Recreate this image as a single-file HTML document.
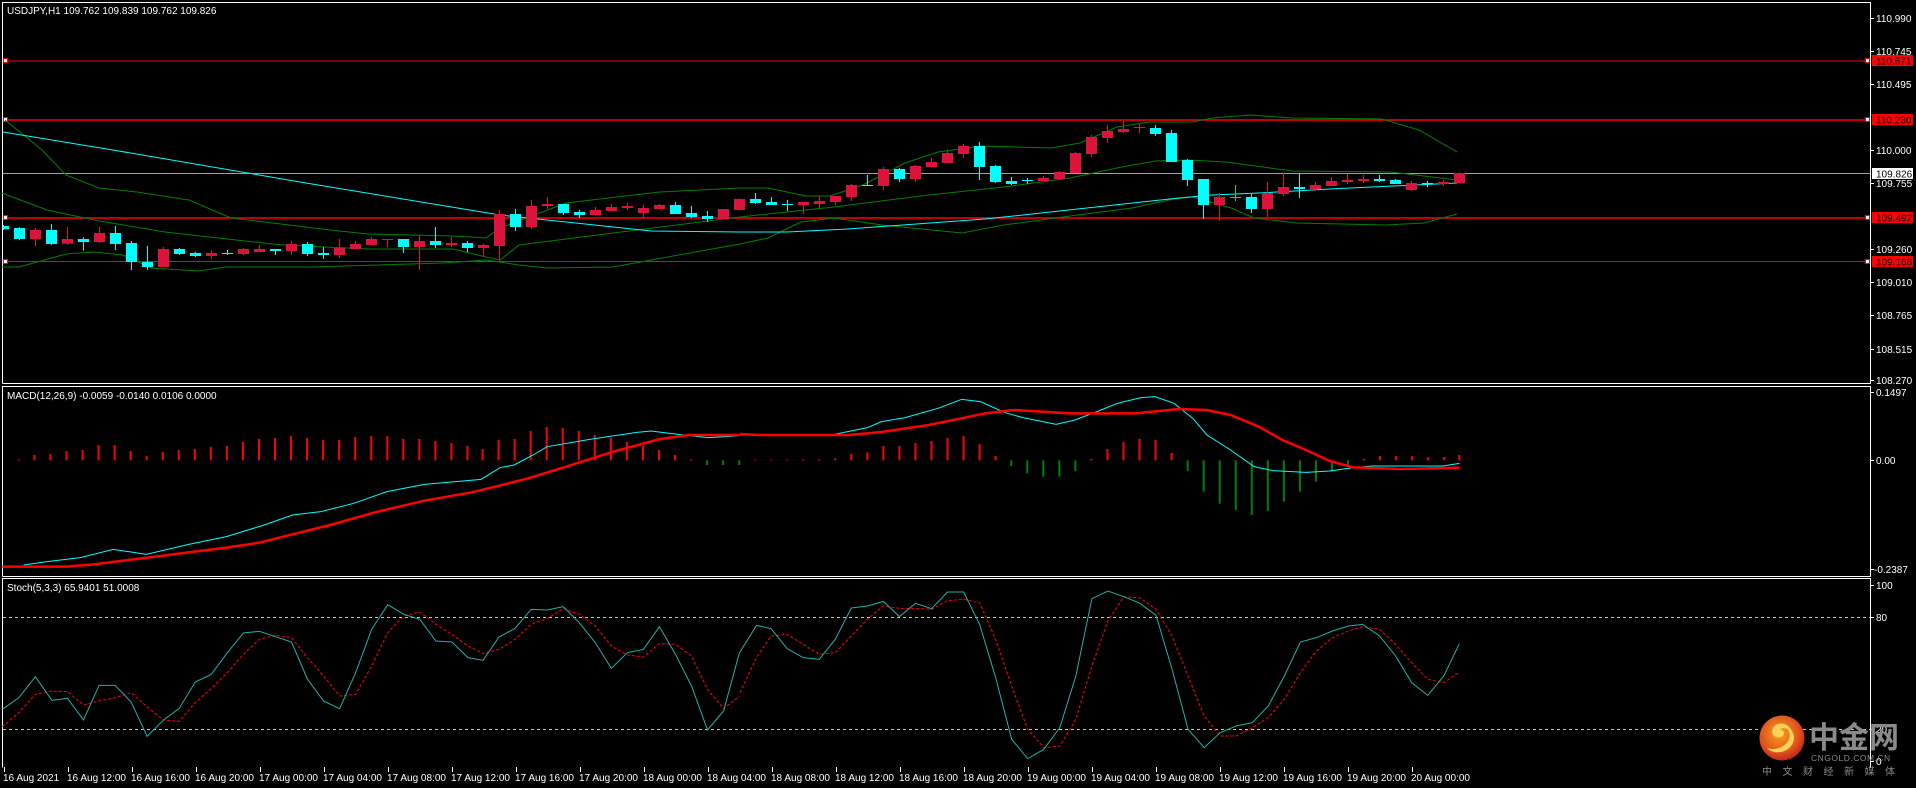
<!DOCTYPE html>
<html><head><meta charset="utf-8"><style>
html,body{margin:0;padding:0;background:#000;width:1916px;height:788px;overflow:hidden}
svg{display:block}
text{font-family:"Liberation Sans","Noto Sans CJK SC",sans-serif;font-size:10px;fill:#fff}
.ns{vector-effect:non-scaling-stroke}
</style></head><body>
<svg width="1916" height="788" viewBox="0 0 1916 788" xmlns="http://www.w3.org/2000/svg">
<defs>
<radialGradient id="lg" cx="45%" cy="40%" r="60%"><stop offset="0" stop-color="#f7a21b"/><stop offset="0.7" stop-color="#e2541d"/><stop offset="1" stop-color="#c4271a"/></radialGradient>
</defs>
<rect width="1916" height="788" fill="#000"/>
<g fill="none" stroke="#fff" stroke-width="1">
<path d="M2.5 383.5V2.5H1870.5V383.5H2.5"/>
<path d="M2.5 576.5V386.5H1870.5V576.5H2.5"/>
<path d="M2.5 767.5V578.5H1870.5V767.5"/>
</g>
<line x1="3" y1="61" x2="1870" y2="61" stroke="#ff0000" stroke-width="1"/>
<line x1="3" y1="120" x2="1870" y2="120" stroke="#ff0000" stroke-width="1.5"/>
<line x1="3" y1="173.5" x2="1870" y2="173.5" stroke="#a0a0a0" stroke-width="1"/>
<line x1="3" y1="218" x2="1870" y2="218" stroke="#ff0000" stroke-width="1.5"/>
<line x1="3" y1="261.5" x2="1870" y2="261.5" stroke="#ff0000" stroke-width="1"/>
<g fill="#fff" stroke="#ff0000" stroke-width="1">
<rect x="3.5" y="58.5" width="4" height="4"/><rect x="1865.5" y="58.5" width="4" height="4"/>
<rect x="3.5" y="117.5" width="4" height="4"/><rect x="1865.5" y="117.5" width="4" height="4"/>
<rect x="3.5" y="215.5" width="4" height="4"/><rect x="1865.5" y="215.5" width="4" height="4"/>
<rect x="3.5" y="259.5" width="4" height="4"/><rect x="1865.5" y="259.5" width="4" height="4"/>
</g>
<g fill="none" stroke="#008000" stroke-width="1">
<polyline points="5,120 42,150 66,175 99,188 137,192 189,200 231,218 330,230 368,234 453,236 486,238 500,228 566,203 660,192 740,188 768,188 787,192 806,196 830,196 863,185 905,163 938,152 981,146 1051,148 1080,143 1117,127 1150,122 1193,122 1212,118 1250,115 1292,118 1382,119 1419,130 1457,152"/>
<polyline points="2,193 47,210 94,220 165,232 236,240 283,245 368,249 453,249 486,257 500,260 519,245 613,233 740,217 834,207 929,195 1004,187 1070,178 1117,168 1155,161 1188,160 1226,162 1292,171 1391,172 1457,180"/>
<polyline points="2,267 19,267 66,254 94,252 123,255 151,268 198,271 226,267 311,267 443,263 486,260 519,265 547,268 613,267 651,260 740,244 768,238 801,222 834,218 882,225 962,233 1004,225 1070,216 1132,208 1174,199 1193,197 1231,208 1254,218 1297,223 1386,225 1424,223 1457,214"/>
</g>
<polyline fill="none" stroke="#00ffff" stroke-width="1" points="3,132 113,150 300,182 500,215 651,231 740,232 787,232 848,229 985,219 1004,217 1179,198 1212,195 1259,193 1330,189 1457,183"/>
<g transform="translate(0,150) scale(1,0.33333)">
<path class="ns" fill="none" stroke="#dc143c" stroke-width="1" d="M35.5 234V288M67.5 231V285M99.5 231V279M163.5 291V351M211.5 300V327M243.5 294V315M259.5 285V306M291.5 273V315M339.5 267V324M355.5 273V297M371.5 261V285M387.5 267V291M419.5 255V360M451.5 261V291M483.5 282V321M499.5 180V333M531.5 150V237M547.5 141V177M595.5 171V195M611.5 162V183M627.5 159V180M643.5 165V204M659.5 162V177M723.5 177V207M739.5 145V182"/>
<g fill="#dc143c">
<rect x="30" y="240" width="11" height="27"/><rect x="62" y="267" width="11" height="14"/><rect x="94" y="249" width="11" height="27"/><rect x="158" y="297" width="11" height="54"/><rect x="206" y="309" width="11" height="9"/><rect x="238" y="297" width="11" height="15"/><rect x="254" y="297" width="11" height="9"/><rect x="286" y="282" width="11" height="21"/><rect x="334" y="294" width="11" height="21"/><rect x="350" y="282" width="11" height="15"/><rect x="366" y="267" width="11" height="18"/><rect x="382" y="267" width="11" height="3"/><rect x="414" y="273" width="11" height="18"/><rect x="446" y="279" width="11" height="6"/><rect x="478" y="285" width="11" height="9"/><rect x="494" y="192" width="11" height="96"/><rect x="526" y="168" width="11" height="63"/><rect x="542" y="162" width="11" height="6"/><rect x="590" y="180" width="11" height="15"/><rect x="606" y="171" width="11" height="12"/><rect x="622" y="168" width="11" height="6"/><rect x="638" y="174" width="11" height="15"/><rect x="654" y="165" width="11" height="12"/><rect x="718" y="177" width="11" height="30"/><rect x="734" y="147" width="11" height="33"/>
</g>
<path class="ns" fill="none" stroke="#00ffff" stroke-width="1" d="M3.5 225V240M19.5 231V270M51.5 222V285M83.5 262V302M115.5 228V300M131.5 273V360M147.5 288V360M179.5 294V315M195.5 306V321M227.5 300V315M275.5 297V315M307.5 276V318M323.5 291V327M403.5 267V309M435.5 231V294M467.5 273V306M515.5 177V243M563.5 162V195M579.5 180V204M675.5 156V192M691.5 168V204M707.5 183V216"/>
<g fill="#00ffff">
<rect x="3" y="228" width="6" height="10"/><rect x="14" y="234" width="11" height="33"/><rect x="46" y="240" width="11" height="42"/><rect x="78" y="267" width="11" height="9"/><rect x="110" y="249" width="11" height="33"/><rect x="126" y="279" width="11" height="57"/><rect x="142" y="336" width="11" height="15"/><rect x="174" y="297" width="11" height="15"/><rect x="190" y="309" width="11" height="9"/><rect x="222" y="309" width="11" height="3"/><rect x="270" y="297" width="11" height="6"/><rect x="302" y="282" width="11" height="30"/><rect x="318" y="309" width="11" height="6"/><rect x="398" y="267" width="11" height="24"/><rect x="430" y="273" width="11" height="12"/><rect x="462" y="279" width="11" height="15"/><rect x="510" y="192" width="11" height="39"/><rect x="558" y="162" width="11" height="27"/><rect x="574" y="186" width="11" height="9"/><rect x="670" y="165" width="11" height="27"/><rect x="686" y="189" width="11" height="12"/><rect x="702" y="198" width="11" height="9"/>
</g>
</g>
<g transform="translate(0,110) scale(1,0.33333)">
<path class="ns" fill="none" stroke="#dc143c" stroke-width="1" d="M803.5 276V312M819.5 258V294M835.5 258V285M851.5 222V273M883.5 171V240M915.5 165V216M931.5 144V171M947.5 123V159M963.5 102V144M1043.5 198V213M1059.5 183V210M1075.5 126V189M1091.5 75V141M1107.5 45V99M1123.5 33V69M1139.5 42V69M1219.5 249V333M1267.5 216V321M1283.5 189V258M1315.5 216V243M1331.5 201V228M1347.5 192V222M1363.5 195V219M1411.5 213V243M1443.5 210V228M1459.5 187V221"/>
<g fill="#dc143c">
<rect x="798" y="276" width="11" height="9"/><rect x="814" y="273" width="11" height="9"/><rect x="830" y="258" width="11" height="18"/><rect x="846" y="225" width="11" height="36"/><rect x="878" y="177" width="11" height="51"/><rect x="910" y="168" width="11" height="39"/><rect x="926" y="156" width="11" height="15"/><rect x="942" y="129" width="11" height="30"/><rect x="958" y="108" width="11" height="24"/><rect x="1038" y="204" width="11" height="9"/><rect x="1054" y="186" width="11" height="21"/><rect x="1070" y="129" width="11" height="60"/><rect x="1086" y="81" width="11" height="51"/><rect x="1102" y="63" width="11" height="21"/><rect x="1118" y="57" width="11" height="9"/><rect x="1134" y="51" width="11" height="3"/><rect x="1214" y="261" width="11" height="24"/><rect x="1262" y="249" width="11" height="48"/><rect x="1278" y="231" width="11" height="21"/><rect x="1310" y="225" width="11" height="12"/><rect x="1326" y="213" width="11" height="15"/><rect x="1342" y="210" width="11" height="6"/><rect x="1358" y="207" width="11" height="6"/><rect x="1406" y="219" width="11" height="21"/><rect x="1438" y="216" width="11" height="6"/><rect x="1454" y="189" width="11" height="30"/>
</g>
<path class="ns" fill="none" stroke="#00ffff" stroke-width="1" d="M755.5 249V282M771.5 261V285M787.5 270V303M867.5 195V228M899.5 174V216M979.5 96V210M995.5 165V219M1011.5 201V225M1027.5 204V222M1155.5 45V78M1171.5 60V156M1187.5 147V228M1203.5 207V327M1251.5 252V309M1299.5 189V264M1379.5 195V216M1395.5 207V222M1427.5 213V231"/>
<g fill="#00ffff">
<rect x="750" y="267" width="11" height="12"/><rect x="766" y="276" width="11" height="9"/><rect x="782" y="282" width="11" height="3"/><rect x="862" y="225" width="11" height="3"/><rect x="894" y="177" width="11" height="30"/><rect x="974" y="108" width="11" height="63"/><rect x="990" y="168" width="11" height="48"/><rect x="1006" y="213" width="11" height="9"/><rect x="1022" y="210" width="11" height="3"/><rect x="1150" y="54" width="11" height="18"/><rect x="1166" y="69" width="11" height="87"/><rect x="1182" y="150" width="11" height="60"/><rect x="1198" y="207" width="11" height="78"/><rect x="1246" y="261" width="11" height="36"/><rect x="1294" y="231" width="11" height="6"/><rect x="1374" y="207" width="11" height="6"/><rect x="1390" y="210" width="11" height="12"/><rect x="1422" y="219" width="11" height="3"/>
</g>
<path class="ns" fill="none" stroke="#32cd32" stroke-width="1" d="M1235.5 225V273"/>
<rect x="1230" y="261" width="11" height="3" fill="#32cd32"/>
</g>
<text x="7" y="14">USDJPY,H1  109.762 109.839 109.762 109.826</text>
<g transform="translate(0,385) scale(0.47170,0.33333)">
<path class="ns" fill="none" stroke="#ff0000" stroke-width="2" d="M40 226V223M73 226V210M107 226V207M141 226V198M175 226V195M209 226V180M243 226V180M277 226V198M311 226V213M345 226V201M379 226V195M413 226V192M447 226V186M481 226V183M515 226V171M549 226V162M583 226V159M617 226V153M651 226V159M685 226V165M719 226V165M753 226V156M787 226V153M821 226V153M855 226V162M889 226V162M923 226V168M957 226V174M991 226V183M1023 226V192M1057 226V165M1091 226V162M1125 226V138M1159 226V126M1193 226V129M1227 226V138M1261 226V150M1295 226V159M1329 226V171M1363 226V183M1397 226V195M1431 226V210M1465 226V223"/>
<path class="ns" fill="none" stroke="#008000" stroke-width="2" d="M1499 226V240M1533 226V240M1567 226V240"/>
<polyline class="ns" fill="none" stroke="#00ffff" stroke-width="1" points="50,540 100,530 170,518 240,493 310,508 400,478 480,455 560,420 620,390 680,380 750,355 820,320 900,298 1020,283 1060,248 1090,240 1130,210 1160,185 1250,163 1350,142 1380,138 1420,145 1500,158 1540,155 1568,152"/>
<polyline class="ns" fill="none" stroke="#ff0000" stroke-width="2.5" points="5,545 140,545 200,538 300,520 400,502 480,488 550,473 600,455 700,420 800,380 900,347 1000,322 1050,305 1120,280 1200,245 1300,200 1400,162 1460,150 1568,150"/>
</g>
<g transform="translate(740,385) scale(0.47170,0.33333)">
<path class="ns" fill="none" stroke="#ff0000" stroke-width="2" d="M32 226V224M66 226V224M100 226V224M134 226V223M168 226V223M202 226V220M236 226V207M270 226V202M304 226V183M338 226V183M372 226V174M406 226V168M440 226V159M474 226V153M508 226V177M542 226V213M745 226V222M779 226V192M813 226V171M847 226V162M881 226V165M915 226V204M1323 226V222M1357 226V213M1391 226V213M1425 226V213M1459 226V216M1493 226V216M1525 226V210"/>
<path class="ns" fill="none" stroke="#008000" stroke-width="2" d="M575 226V243M609 226V265M643 226V275M677 226V275M711 226V258M949 226V258M983 226V320M1017 226V356M1051 226V375M1085 226V390M1119 226V378M1153 226V350M1187 226V320M1221 226V290M1255 226V260M1289 226V240"/>
<polyline class="ns" fill="none" stroke="#00ffff" stroke-width="1" points="0,150 200,148 270,128 300,110 350,98 420,70 470,43 510,50 560,82 600,98 670,118 710,105 760,78 800,55 850,38 880,35 920,55 960,100 990,150 1040,195 1090,245 1130,257 1200,262 1250,258 1300,248 1340,243 1490,243 1525,235"/>
<polyline class="ns" fill="none" stroke="#ff0000" stroke-width="2.5" points="0,147 40,150 230,150 300,141 400,120 470,100 520,85 580,75 700,85 840,85 930,72 990,75 1040,90 1100,125 1150,165 1200,195 1250,228 1300,247 1400,252 1460,250 1525,248"/>
</g>
<text x="7" y="399">MACD(12,26,9) -0.0059 -0.0140 0.0106 0.0000</text>
<line x1="3" y1="617.5" x2="1870" y2="617.5" stroke="#c8c8c8" stroke-dasharray="3,3"/>
<line x1="3" y1="729.5" x2="1870" y2="729.5" stroke="#c8c8c8" stroke-dasharray="3,3"/>
<g transform="translate(0,576) scale(0.47170,0.33333)">
<polyline class="ns" fill="none" stroke="#ff0000" stroke-width="1" stroke-dasharray="3,2" points="5,452 40,410 75,355 110,345 143,347 177,387 210,375 244,365 278,350 312,393 346,432 380,436 414,380 448,338 482,290 516,235 550,190 584,178 618,185 652,245 686,300 720,360 754,355 788,270 822,170 856,120 890,108 924,145 958,175 992,210 1024,232 1058,220 1092,190 1126,145 1160,128 1194,98 1228,115 1262,150 1296,210 1330,237 1364,243 1398,203 1432,205 1466,240 1500,340 1534,398 1568,360"/>
<polyline class="ns" fill="none" stroke="#20b2aa" stroke-width="1" points="5,400 40,365 75,302 110,373 143,367 177,432 210,328 244,328 278,378 312,481 346,433 380,397 414,318 448,295 482,230 516,171 550,166 584,182 618,198 652,310 686,375 720,398 754,290 788,160 822,86 856,115 890,130 924,195 958,198 992,245 1024,253 1058,183 1092,157 1126,100 1160,102 1194,92 1228,140 1262,200 1296,277 1330,230 1364,220 1398,152 1432,235 1466,330 1500,462 1534,405 1568,228"/>
</g>
<g transform="translate(740,576) scale(0.47170,0.33333)">
<polyline class="ns" fill="none" stroke="#ff0000" stroke-width="1" stroke-dasharray="3,2" points="0,350 35,245 66,180 100,175 134,205 168,235 202,230 236,180 270,130 304,90 338,97 372,97 406,100 440,74 474,70 508,80 542,190 576,330 610,460 644,515 678,510 712,430 746,270 780,135 814,62 848,66 882,100 916,180 950,300 984,420 1018,480 1052,480 1086,455 1120,425 1154,370 1188,290 1222,225 1256,185 1290,165 1320,152 1356,160 1390,205 1424,260 1458,310 1492,320 1525,288"/>
<polyline class="ns" fill="none" stroke="#20b2aa" stroke-width="1" points="0,228 35,148 66,158 100,218 134,245 168,250 202,190 236,96 270,90 304,76 338,122 372,82 406,98 440,48 474,48 508,145 542,305 576,490 610,548 644,520 678,455 712,300 746,68 780,45 814,62 848,82 882,118 916,280 950,460 984,515 1018,470 1052,450 1086,440 1120,390 1154,300 1188,198 1222,185 1256,165 1290,150 1320,145 1356,180 1390,240 1424,320 1458,358 1492,300 1525,203"/>
</g>
<text x="7" y="591">Stoch(5,3,3) 65.9401 51.0008</text>
<g stroke="#fff" stroke-width="1">
<path d="M1870 18.5h4M1870 51.5h4M1870 84.5h4M1870 150.5h4M1870 183.5h4M1870 249.5h4M1870 282.5h4M1870 315.5h4M1870 349.5h4M1870 380.5h4M1870 392.5h4M1870 460.5h4M1870 569.5h4M1870 585.5h4M1870 617.5h4M1870 729.5h4M1870 761.5h4"/>
</g>
<text x="1876" y="22">110.990</text>
<text x="1876" y="55">110.745</text>
<text x="1876" y="88">110.495</text>
<text x="1876" y="154">110.000</text>
<text x="1876" y="187">109.755</text>
<text x="1876" y="253">109.260</text>
<text x="1876" y="286">109.010</text>
<text x="1876" y="319">108.765</text>
<text x="1876" y="353">108.515</text>
<text x="1876" y="384">108.270</text>
<rect x="1872" y="55" width="41" height="11" fill="#ff0000"/><text x="1876" y="64.5" style="fill:#000">110.671</text>
<rect x="1872" y="114" width="41" height="11" fill="#ff0000"/><text x="1876" y="123.5" style="fill:#000">110.230</text>
<rect x="1872" y="168" width="41" height="11" fill="#fff"/><text x="1876" y="177.5" style="fill:#000">109.826</text>
<rect x="1872" y="212" width="41" height="11" fill="#ff0000"/><text x="1876" y="221.5" style="fill:#000">109.492</text>
<rect x="1872" y="256" width="41" height="11" fill="#ff0000"/><text x="1876" y="265.5" style="fill:#000">109.168</text>
<text x="1876" y="396">0.1497</text>
<text x="1876" y="464">0.00</text>
<text x="1874" y="573">-0.2387</text>
<text x="1876" y="589">100</text>
<text x="1876" y="621">80</text>
<text x="1876" y="733">20</text>
<text x="1876" y="765">0</text>
<path stroke="#fff" stroke-width="1" d="M4.5 767v5M68.5 767v5M132.5 767v5M196.5 767v5M260.5 767v5M324.5 767v5M388.5 767v5M452.5 767v5M516.5 767v5M580.5 767v5M644.5 767v5M708.5 767v5M772.5 767v5M836.5 767v5M900.5 767v5M964.5 767v5M1028.5 767v5M1092.5 767v5M1156.5 767v5M1220.5 767v5M1284.5 767v5M1348.5 767v5M1412.5 767v5"/>
<g>
<text x="3" y="781">16 Aug 2021</text><text x="67" y="781">16 Aug 12:00</text><text x="131" y="781">16 Aug 16:00</text><text x="195" y="781">16 Aug 20:00</text><text x="259" y="781">17 Aug 00:00</text><text x="323" y="781">17 Aug 04:00</text><text x="387" y="781">17 Aug 08:00</text><text x="451" y="781">17 Aug 12:00</text><text x="515" y="781">17 Aug 16:00</text><text x="579" y="781">17 Aug 20:00</text><text x="643" y="781">18 Aug 00:00</text><text x="707" y="781">18 Aug 04:00</text><text x="771" y="781">18 Aug 08:00</text><text x="835" y="781">18 Aug 12:00</text><text x="899" y="781">18 Aug 16:00</text><text x="963" y="781">18 Aug 20:00</text><text x="1027" y="781">19 Aug 00:00</text><text x="1091" y="781">19 Aug 04:00</text><text x="1155" y="781">19 Aug 08:00</text><text x="1219" y="781">19 Aug 12:00</text><text x="1283" y="781">19 Aug 16:00</text><text x="1347" y="781">19 Aug 20:00</text><text x="1411" y="781">20 Aug 00:00</text>
</g>
<circle cx="1782" cy="738" r="22.5" fill="url(#lg)"/>
<path d="M1790 728c-4-6-14-6-17 0c-3 6 2 11 8 9c5-2 3-8-1-7c5-5 12 1 9 9c-3 8-14 12-22 9c5 6 18 6 24-2c5-6 3-13-1-18z" fill="#fbd257"/>
<text x="1809" y="748" style="font-size:30px;font-weight:bold;fill:#8a8a8a;font-family:'Noto Sans CJK SC','WenQuanYi Zen Hei',sans-serif">中金网</text>
<text x="1811" y="761" style="font-size:8.5px;fill:#8a8a8a;letter-spacing:0.5px">CNGOLD.COM.CN</text>
<text x="1762" y="775" style="font-size:10px;fill:#8a8a8a;letter-spacing:10.5px;font-family:'Noto Sans CJK SC',sans-serif">中文财经新媒体</text>
</svg>
</body></html>
